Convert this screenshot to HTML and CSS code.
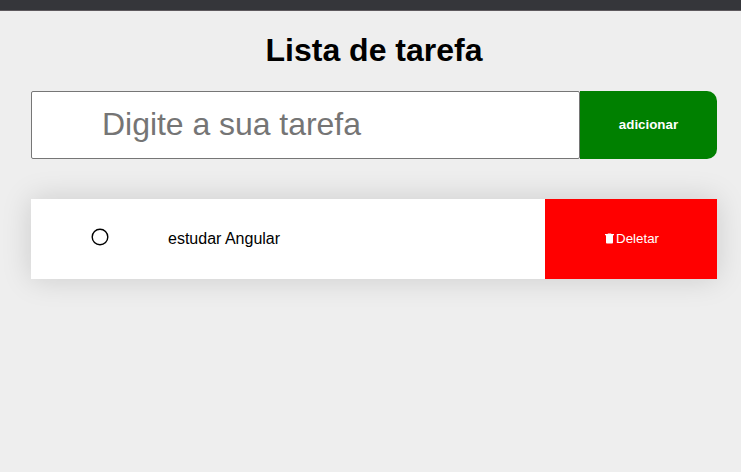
FILE: index.html
```html
<!DOCTYPE html>
<html lang="pt-BR">
<head>
<meta charset="utf-8">
<title>Lista de tarefa</title>
<link rel="stylesheet" href="styles.css">
</head>
<body>
<div class="topbar"></div>
<main class="container">
  <h1 class="title">Lista de tarefa</h1>
  <form class="task-form">
    <input class="task-input" type="text" placeholder="Digite a sua tarefa">
    <button class="add-button" type="button">adicionar</button>
  </form>
  <ul class="tasks">
    <li class="task">
      <span class="check">
        <svg width="18" height="18" viewBox="0 0 18 18"><circle cx="9" cy="9" r="7.8" fill="none" stroke="#000" stroke-width="1.4"/></svg>
      </span>
      <span class="task-name">estudar Angular</span>
      <button class="delete-button" type="button">
        <svg class="trash" width="9" height="11" viewBox="0 0 9 11" fill="#fff"><path d="M0 1h2.5L3 .4h3l.5.6H9v1.2H0zM1 2.2h7v7.3c0 .6-.3 1-.9 1H1.9c-.6 0-.9-.4-.9-1z"/></svg>Deletar
      </button>
    </li>
  </ul>
</main>
</body>
</html>
```
FILE: styles.css
```css
* {
  box-sizing: border-box;
  margin: 0;
  padding: 0;
}

body {
  background: #eee;
  color: #000;
  font-family: "Liberation Sans", Arial, sans-serif;
  min-height: 100vh;
}

.topbar {
  height: 11px;
  background: #35363a;
  border-bottom: 1px solid #5d595d;
}

.container {
  width: 686px;
  margin-left: 31px;
  padding-top: 21px;
}

.title {
  font-size: 32px;
  line-height: 37px;
  text-align: center;
}

.task-form {
  display: flex;
  height: 68px;
  margin-top: 22px;
}

.task-input {
  width: 549px;
  padding: 0 70px 2px;
  border: 1px solid #767676;
  border-radius: 2px;
  background: #fff;
  font-family: inherit;
  font-size: 32px;
  letter-spacing: -0.04px;
  outline: none;
}

.task-input::placeholder {
  color: #757575;
}

.add-button {
  flex: 1;
  padding-bottom: 2px;
  border: none;
  border-radius: 0 10px 10px 0;
  background: green;
  color: #fff;
  font: bold 13.333px "Liberation Sans", Arial, sans-serif;
}

.tasks {
  margin-top: 40px;
  list-style: none;
}

.task {
  display: flex;
  align-items: stretch;
  height: 80px;
  background: #fff;
  box-shadow: 0 0 30px rgba(0, 0, 0, 0.15);
}

.check {
  display: flex;
  align-items: center;
  justify-content: center;
  width: 137px;
  padding-bottom: 4px;
}

.task-name {
  flex: 1;
  font-size: 16px;
  line-height: 80px;
}

.delete-button {
  display: flex;
  align-items: center;
  justify-content: center;
  gap: 2px;
  width: 172px;
  padding: 0 0 2px 2px;
  border: none;
  background: red;
  color: #fff;
  font: 13.333px "Liberation Sans", Arial, sans-serif;
}
```
